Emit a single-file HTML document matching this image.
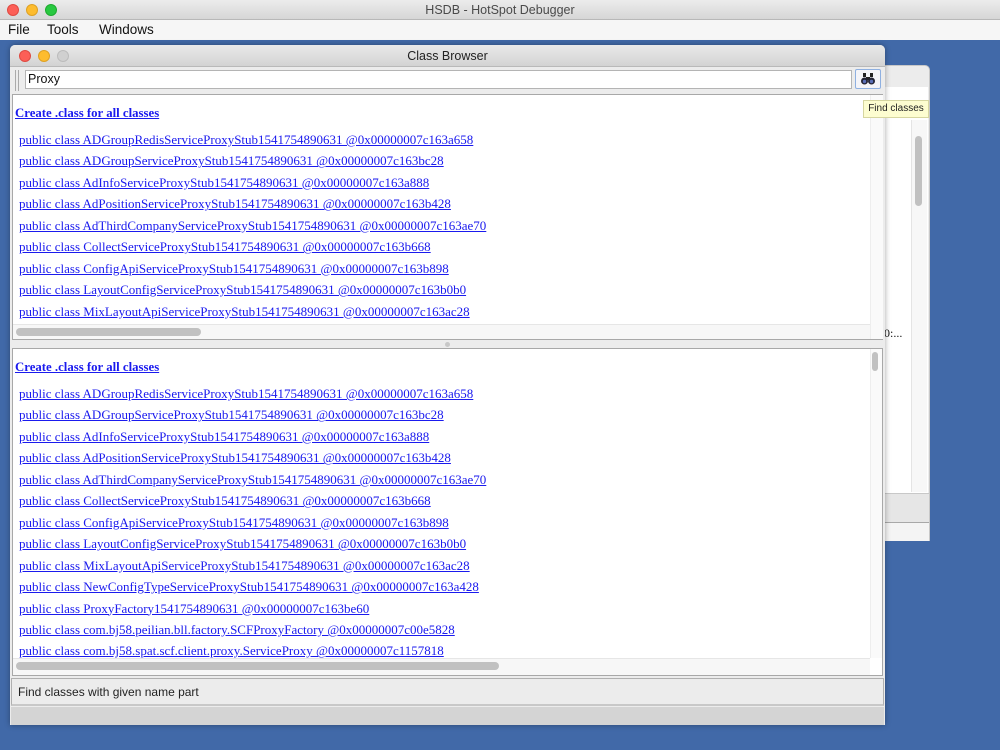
<!DOCTYPE html>
<html><head><meta charset="utf-8"><style>
*{margin:0;padding:0;box-sizing:border-box}
body{width:1000px;height:750px;overflow:hidden;background:#4169a8;font-family:"Liberation Sans",sans-serif;position:relative}
.abs{position:absolute}
.tb{left:0;top:0;width:1000px;height:20px;background:linear-gradient(#ececec,#d6d6d6);border-bottom:1px solid #b8b8b8;text-align:center;font-size:12.5px;line-height:20px;color:#4a4a4a}
.dot{position:absolute;width:12px;height:12px;border-radius:50%}
.menu{left:0;top:20px;width:1000px;height:20px;background:#f6f6f6;font-size:13.5px;line-height:20px;color:#111}
.menu span{position:absolute;top:0}
a{color:#1a1aee;text-decoration:underline}
.links{font-family:"Liberation Serif",serif;font-size:13px;line-height:21.45px;white-space:nowrap}
.links div{padding-left:6px}
.create{font-family:"Liberation Serif",serif;font-weight:bold;font-size:12.8px;color:#1a1aee;text-decoration:underline}
</style></head><body>
<div class="abs tb">HSDB - HotSpot Debugger
<div class="dot" style="left:7px;top:4px;background:#fc5f57;border:1px solid #df4a42"></div>
<div class="dot" style="left:26px;top:4px;background:#fdbc2e;border:1px solid #dea123"></div>
<div class="dot" style="left:45px;top:4px;background:#28c840;border:1px solid #1eaa2f"></div>
</div>
<div class="abs menu"><span style="left:8px">File</span><span style="left:47px">Tools</span><span style="left:99px">Windows</span></div>

<!-- background window -->
<div class="abs" style="left:860px;top:65px;width:70px;height:476px;background:#ececec;border-radius:5px 5px 0 0;border:1px solid #c8c8c8"></div>
<div class="abs" style="left:884px;top:87px;width:44px;height:406px;background:#fff;border-left:1px solid #ddd"></div>
<div class="abs" style="left:911px;top:120px;width:16px;height:372px;background:#f7f7f7;border-left:1px solid #e4e4e4"></div>
<div class="abs" style="left:915px;top:136px;width:7px;height:70px;background:#c1c1c1;border-radius:4px"></div>
<div class="abs" style="left:884px;top:326px;font-family:'Liberation Serif',serif;font-size:12px;color:#111">0:...</div>
<div class="abs" style="left:884px;top:493px;width:45px;height:30px;background:#e6e6e6;border-top:1px solid #c8c8c8;border-bottom:1px solid #a8a8a8"></div>
<div class="abs" style="left:884px;top:523px;width:45px;height:18px;background:#f4f4f4"></div>

<!-- class browser -->
<div class="abs" style="left:10px;top:45px;width:875px;height:680px;background:#ececec;border-radius:5px 5px 0 0;box-shadow:0 0 6px rgba(0,0,0,.35)">
 <div class="abs" style="left:0;top:0;width:875px;height:22px;background:linear-gradient(#e9e9e9,#d3d3d3);border-radius:5px 5px 0 0;border-bottom:1px solid #b9b9b9;text-align:center;font-size:12.5px;line-height:22px;color:#222">Class Browser
  <div class="dot" style="left:9px;top:5px;background:#fc5f57;border:1px solid #df4a42"></div>
  <div class="dot" style="left:28px;top:5px;background:#fdbc2e;border:1px solid #dea123"></div>
  <div class="dot" style="left:47px;top:5px;background:#d0d0d0;border:1px solid #bcbcbc"></div>
 </div>
 <div class="abs" style="left:5px;top:25px;width:1px;height:21px;background:#aaa"></div>
 <div class="abs" style="left:8px;top:25px;width:1px;height:21px;background:#aaa"></div>
 <div class="abs" style="left:15px;top:25px;width:827px;height:19px;background:#fff;border:1px solid #b4b4b4;font-size:12.5px;line-height:17px;padding-left:2px;color:#111">Proxy</div>
 <div class="abs" style="left:845px;top:24px;width:26px;height:20px;background:#f4f4f8;border:1px solid #8fb0e0;border-radius:2px;text-align:center">
  <svg width="16" height="14" viewBox="0 0 16 14" style="margin-top:2px"><rect x="3" y="1" width="3" height="4" fill="#222"/><rect x="10" y="1" width="3" height="4" fill="#222"/><rect x="6" y="5" width="4" height="3" fill="#222"/><circle cx="4.5" cy="9" r="3.5" fill="#223"/><circle cx="11.5" cy="9" r="3.5" fill="#223"/><circle cx="4.5" cy="9.5" r="1.7" fill="#5a6fb8"/><circle cx="11.5" cy="9.5" r="1.7" fill="#5a6fb8"/></svg>
 </div>
</div>

<!-- top pane -->
<div class="abs" style="left:12px;top:94px;width:871px;height:246px;border:1px solid #a8a8a8;background:#fff">
 <div class="abs" style="left:2px;top:9px"><span class="create">Create .class for all classes</span></div>
 <div class="abs links" style="left:0;top:34px">
  <div><a>public class ADGroupRedisServiceProxyStub1541754890631 @0x00000007c163a658</a></div>
  <div><a>public class ADGroupServiceProxyStub1541754890631 @0x00000007c163bc28</a></div>
  <div><a>public class AdInfoServiceProxyStub1541754890631 @0x00000007c163a888</a></div>
  <div><a>public class AdPositionServiceProxyStub1541754890631 @0x00000007c163b428</a></div>
  <div><a>public class AdThirdCompanyServiceProxyStub1541754890631 @0x00000007c163ae70</a></div>
  <div><a>public class CollectServiceProxyStub1541754890631 @0x00000007c163b668</a></div>
  <div><a>public class ConfigApiServiceProxyStub1541754890631 @0x00000007c163b898</a></div>
  <div><a>public class LayoutConfigServiceProxyStub1541754890631 @0x00000007c163b0b0</a></div>
  <div><a>public class MixLayoutApiServiceProxyStub1541754890631 @0x00000007c163ac28</a></div>
 </div>
 <div class="abs" style="left:0;top:229px;width:857px;height:15px;background:#f7f7f7;border-top:1px solid #e6e6e6"></div>
 <div class="abs" style="left:3px;top:233px;width:185px;height:8px;background:#c1c1c1;border-radius:4px"></div>
 <div class="abs" style="left:857px;top:0;width:13px;height:244px;background:#fafafa;border-left:1px solid #eee"></div>
</div>
<div class="abs" style="left:445px;top:342px;width:5px;height:5px;border-radius:50%;background:#c8c8c8"></div>

<!-- bottom pane -->
<div class="abs" style="left:12px;top:348px;width:871px;height:328px;border:1px solid #a8a8a8;background:#fff">
 <div class="abs" style="left:2px;top:9px"><span class="create">Create .class for all classes</span></div>
 <div class="abs links" style="left:0;top:34px">
  <div><a>public class ADGroupRedisServiceProxyStub1541754890631 @0x00000007c163a658</a></div>
  <div><a>public class ADGroupServiceProxyStub1541754890631 @0x00000007c163bc28</a></div>
  <div><a>public class AdInfoServiceProxyStub1541754890631 @0x00000007c163a888</a></div>
  <div><a>public class AdPositionServiceProxyStub1541754890631 @0x00000007c163b428</a></div>
  <div><a>public class AdThirdCompanyServiceProxyStub1541754890631 @0x00000007c163ae70</a></div>
  <div><a>public class CollectServiceProxyStub1541754890631 @0x00000007c163b668</a></div>
  <div><a>public class ConfigApiServiceProxyStub1541754890631 @0x00000007c163b898</a></div>
  <div><a>public class LayoutConfigServiceProxyStub1541754890631 @0x00000007c163b0b0</a></div>
  <div><a>public class MixLayoutApiServiceProxyStub1541754890631 @0x00000007c163ac28</a></div>
  <div><a>public class NewConfigTypeServiceProxyStub1541754890631 @0x00000007c163a428</a></div>
  <div><a>public class ProxyFactory1541754890631 @0x00000007c163be60</a></div>
  <div><a>public class com.bj58.peilian.bll.factory.SCFProxyFactory @0x00000007c00e5828</a></div>
  <div><a>public class com.bj58.spat.scf.client.proxy.ServiceProxy @0x00000007c1157818</a></div>
 </div>
 <div class="abs" style="left:0;top:309px;width:857px;height:17px;background:#f7f7f7;border-top:1px solid #e6e6e6"></div>
 <div class="abs" style="left:3px;top:313px;width:483px;height:8px;background:#c1c1c1;border-radius:4px"></div>
 <div class="abs" style="left:857px;top:0;width:12px;height:309px;background:#fafafa;border-left:1px solid #eee"></div>
 <div class="abs" style="left:859px;top:3px;width:6px;height:19px;background:#c1c1c1;border-radius:3px"></div>
</div>

<!-- status -->
<div class="abs" style="left:11px;top:678px;width:873px;height:28px;background:#ececec;border:1px solid #b0b0b0;border-bottom:2px solid #c8c8c8;font-size:12px;line-height:26px;padding-left:6px;color:#222">Find classes with given name part</div>
<div class="abs" style="left:11px;top:707px;width:873px;height:18px;background:#d4d4d4"></div>

<div class="abs" style="left:863px;top:100px;width:66px;height:18px;background:#fdfdd0;border:1px solid #d6d6a0;font-size:10px;line-height:16px;text-align:center;color:#222;z-index:10">Find classes</div>
</body></html>
